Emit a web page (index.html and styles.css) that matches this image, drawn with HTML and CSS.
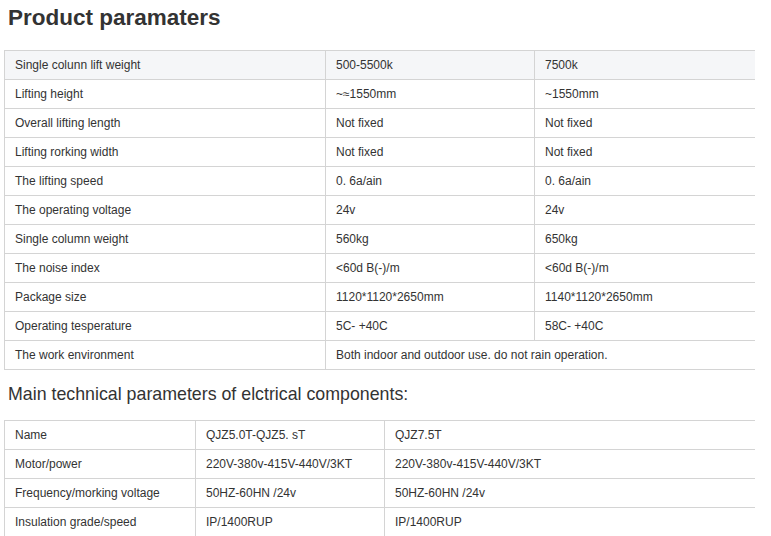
FILE: index.html
```html
<!DOCTYPE html>
<html>
<head>
<meta charset="utf-8">
<link rel="stylesheet" href="styles.css">
</head>
<body>
<h1 class="title">Product paramaters</h1>
<table class="spec spec-product">
  <colgroup><col class="c1"><col class="c2"><col class="c3"></colgroup>
  <tr class="head"><td>Single colunn lift weight</td><td>500-5500k</td><td>7500k</td></tr>
  <tr><td>Lifting height</td><td>~≈1550mm</td><td>~1550mm</td></tr>
  <tr><td>Overall lifting length</td><td>Not fixed</td><td>Not fixed</td></tr>
  <tr><td>Lifting rorking width</td><td>Not fixed</td><td>Not fixed</td></tr>
  <tr><td>The lifting speed</td><td>0. 6a/ain</td><td>0. 6a/ain</td></tr>
  <tr><td>The operating voltage</td><td>24v</td><td>24v</td></tr>
  <tr><td>Single column weight</td><td>560kg</td><td>650kg</td></tr>
  <tr><td>The noise index</td><td>&lt;60d B(-)/m</td><td>&lt;60d B(-)/m</td></tr>
  <tr><td>Package size</td><td>1120*1120*2650mm</td><td>1140*1120*2650mm</td></tr>
  <tr><td>Operating tesperature</td><td>5C- +40C</td><td>58C- +40C</td></tr>
  <tr><td>The work environment</td><td colspan="2">Both indoor and outdoor use. do not rain operation.</td></tr>
</table>
<h2 class="subtitle">Main technical parameters of elctrical components:</h2>
<table class="spec spec-elec">
  <colgroup><col class="d1"><col class="d2"><col class="d3"></colgroup>
  <tr><td>Name</td><td>QJZ5.0T-QJZ5. sT</td><td>QJZ7.5T</td></tr>
  <tr><td>Motor/power</td><td>220V-380v-415V-440V/3KT</td><td>220V-380v-415V-440V/3KT</td></tr>
  <tr><td>Frequency/morking voltage</td><td>50HZ-60HN /24v</td><td>50HZ-60HN /24v</td></tr>
  <tr><td>Insulation grade/speed</td><td>IP/1400RUP</td><td>IP/1400RUP</td></tr>
</table>
</body>
</html>
```
FILE: styles.css
```css
html, body {
  margin: 0;
  padding: 0;
  background: #fff;
}
body {
  font-family: "Liberation Sans", Arial, sans-serif;
  color: #333;
  padding: 0 0 0 4px;
}
.title {
  margin: 0;
  padding: 4px 0 0 4px;
  height: 50px;
  box-sizing: border-box;
  font-size: 22.5px;
  line-height: 28px;
  font-weight: bold;
  color: #333;
}
.subtitle {
  margin: 0;
  padding: 0 0 0 4px;
  height: 50px;
  box-sizing: border-box;
  font-size: 17.8px;
  line-height: 48px;
  font-weight: normal;
  color: #333;
}
.spec {
  border-collapse: collapse;
  table-layout: fixed;
  width: 750px;
  font-size: 12px;
}
.spec td {
  height: 28px;
  padding: 0 0 0 10px;
  border: 1px solid #d4d4d4;
  vertical-align: middle;
  white-space: nowrap;
  line-height: 14px;
}
.spec td:last-child {
  border-right: none;
}
.spec tr.head td {
  background: #f5f6f8;
}
.c1 { width: 321px; }
.c2 { width: 209px; }
.c3 { width: 220px; }
.d1 { width: 191px; }
.d2 { width: 189px; }
.d3 { width: 370px; }
```
